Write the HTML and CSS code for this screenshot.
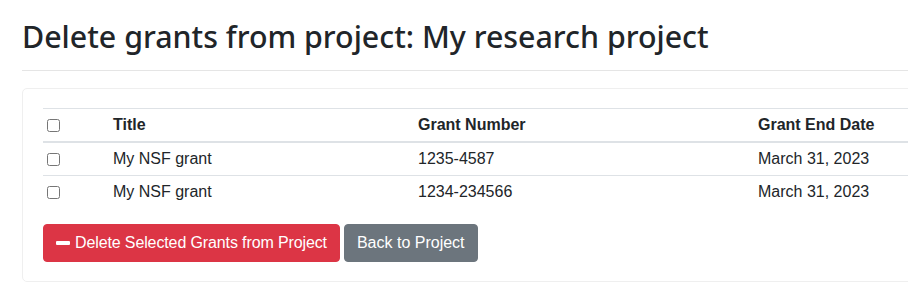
FILE: index.html
```html
<!DOCTYPE html>
<html lang="en">
<head>
<meta charset="utf-8">
<title>Delete grants from project</title>
<link rel="stylesheet" href="styles.css">
</head>
<body>
<div class="page">
  <h2 class="title">Delete grants from project: My research project</h2>
  <hr class="rule">
  <div class="card">
    <table class="grants">
      <colgroup>
        <col class="c-check">
        <col class="c-title">
        <col class="c-number">
        <col class="c-date">
      </colgroup>
      <thead>
        <tr>
          <th><input type="checkbox" class="cb"></th>
          <th>Title</th>
          <th>Grant Number</th>
          <th>Grant End Date</th>
        </tr>
      </thead>
      <tbody>
        <tr>
          <td><input type="checkbox" class="cb"></td>
          <td>My NSF grant</td>
          <td>1235-4587</td>
          <td>March 31, 2023</td>
        </tr>
        <tr>
          <td><input type="checkbox" class="cb"></td>
          <td>My NSF grant</td>
          <td>1234-234566</td>
          <td>March 31, 2023</td>
        </tr>
      </tbody>
    </table>
    <div class="actions">
      <button class="btn btn-danger"><svg class="minus" width="14" height="14" viewBox="0 0 14 14"><rect x="0" y="5" width="14" height="4" rx="1" fill="#fff"/></svg> Delete Selected Grants from Project</button>
      <button class="btn btn-secondary">Back to Project</button>
    </div>
  </div>
</div>
</body>
</html>
```

FILE: styles.css
```css
html, body {
  margin: 0;
  padding: 0;
  overflow: hidden;
  background: #fff;
}
body {
  font-family: "Liberation Sans", Arial, sans-serif;
  font-size: 16px;
  line-height: 1.5;
  color: #212529;
}
.page {
  width: 1100px;
  padding: 0 0 0 22px;
}
.title {
  margin: 0;
  padding-top: 18px;
  font-family: "Noto Sans", "Liberation Sans", sans-serif;
  font-size: 30.35px;
  font-weight: 500;
  line-height: 38.4px;
  color: #212529;
}
.rule {
  margin: 14px 0 0 0;
  border: 0;
  border-top: 1px solid rgba(0, 0, 0, 0.1);
  height: 0;
}
.card {
  margin-top: 17px;
  border: 1px solid #efefef;
  border-radius: 5px;
  padding: 19px 20px 19px 20px;
}
.grants {
  width: 1000px;
  border-collapse: collapse;
  table-layout: fixed;
  margin-bottom: 16px;
}
.c-check { width: 65px; }
.c-title { width: 305px; }
.c-number { width: 340px; }
.grants th, .grants td {
  text-align: left;
  padding: 4px 5px;
  line-height: 24px;
  border-top: 1px solid #dee2e6;
  vertical-align: middle;
}
.grants th {
  font-weight: 700;
}
.grants thead th {
  border-bottom: 2px solid #dee2e6;
}
.grants tbody tr:first-child td {
  border-top: 0;
}
.cb {
  width: 13px;
  height: 13px;
  margin: 0;
  vertical-align: middle;
  position: relative;
  top: -1px;
  left: -1px;
}
.actions {
  display: flex;
  gap: 4px;
}
.btn {
  font-family: inherit;
  font-size: 16px;
  line-height: 24px;
  padding: 6px 12px;
  border: 1px solid transparent;
  border-radius: 4px;
  color: #fff;
  cursor: pointer;
  display: inline-flex;
  align-items: center;
  gap: 5px;
}
.btn-danger {
  background: #dc3545;
  border-color: #dc3545;
  letter-spacing: -0.12px;
}
.btn-secondary {
  background: #6c757d;
  border-color: #6c757d;
}
.minus {
  display: block;
}
```
